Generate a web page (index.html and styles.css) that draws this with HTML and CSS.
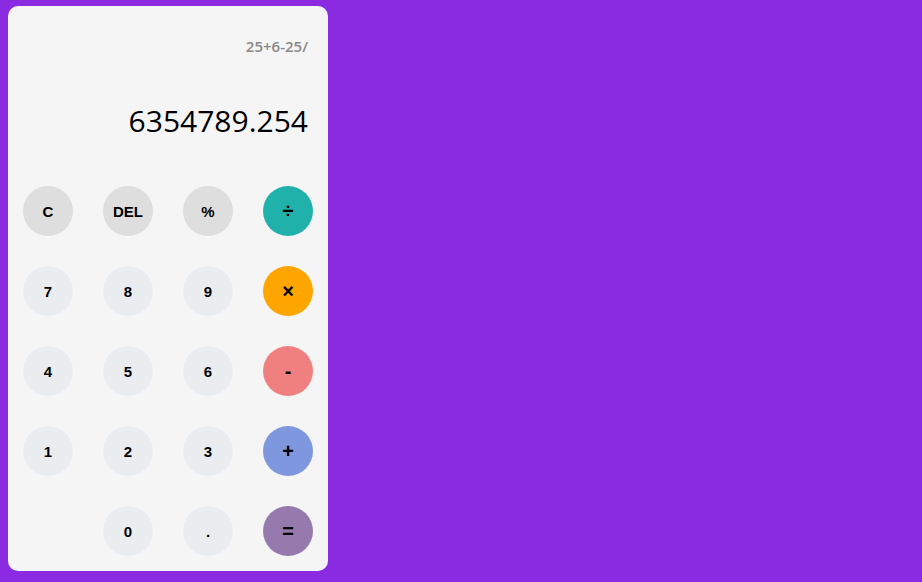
FILE: index.html
```html
<!DOCTYPE html>
<html>
<head>
<meta charset="utf-8">
<link rel="stylesheet" href="styles.css">
</head>
<body>
<div class="calc">
  <div class="display">
    <div class="expr">25+6-25/</div>
    <div class="result">6354789.254</div>
  </div>
  <div class="keys">
    <button class="key fn">C</button>
    <button class="key fn">DEL</button>
    <button class="key fn">%</button>
    <button class="key op div">÷</button>
    <button class="key num">7</button>
    <button class="key num">8</button>
    <button class="key num">9</button>
    <button class="key op mul">×</button>
    <button class="key num">4</button>
    <button class="key num">5</button>
    <button class="key num">6</button>
    <button class="key op sub">-</button>
    <button class="key num">1</button>
    <button class="key num">2</button>
    <button class="key num">3</button>
    <button class="key op add">+</button>
    <span class="blank"></span>
    <button class="key num">0</button>
    <button class="key num">.</button>
    <button class="key op eq">=</button>
  </div>
</div>
</body>
</html>
```
FILE: styles.css
```css
html, body {
  margin: 0;
  padding: 0;
}
body {
  background: #8a2be2;
  padding: 6px 8px;
  height: 582px;
  box-sizing: border-box;
}
.calc {
  width: 320px;
  height: 565px;
  box-sizing: border-box;
  background: #f5f5f5;
  border-radius: 10px;
  padding: 0 15px 15px;
  display: flex;
  flex-direction: column;
}
.display {
  font-family: "Open Sans", sans-serif;
  text-align: right;
  padding: 30px 5px 0 0;
  height: 180px;
  box-sizing: border-box;
}
.expr {
  font-size: 15px;
  font-weight: 600;
  color: #888;
  line-height: 20px;
}
.result {
  margin-top: 46px;
  font-size: 30px;
  font-weight: 500;
  color: #000;
  line-height: 38px;
}
.keys {
  display: grid;
  grid-template-columns: repeat(4, 50px);
  grid-auto-rows: 50px;
  column-gap: 30px;
  row-gap: 30px;
}
.key {
  width: 50px;
  height: 50px;
  border: none;
  border-radius: 50%;
  padding: 0;
  font-family: "Liberation Sans", Arial, sans-serif;
  font-weight: bold;
  font-size: 15px;
  color: #000;
  display: flex;
  align-items: center;
  justify-content: center;
}
.fn { background: #dedede; }
.num { background: #e9edf0; }
.op { font-size: 20px; }
.div { background: #20b2aa; }
.mul { background: #ffa500; }
.sub { background: #f08080; }
.add { background: #7f97df; }
.eq { background: #967aae; }
```
